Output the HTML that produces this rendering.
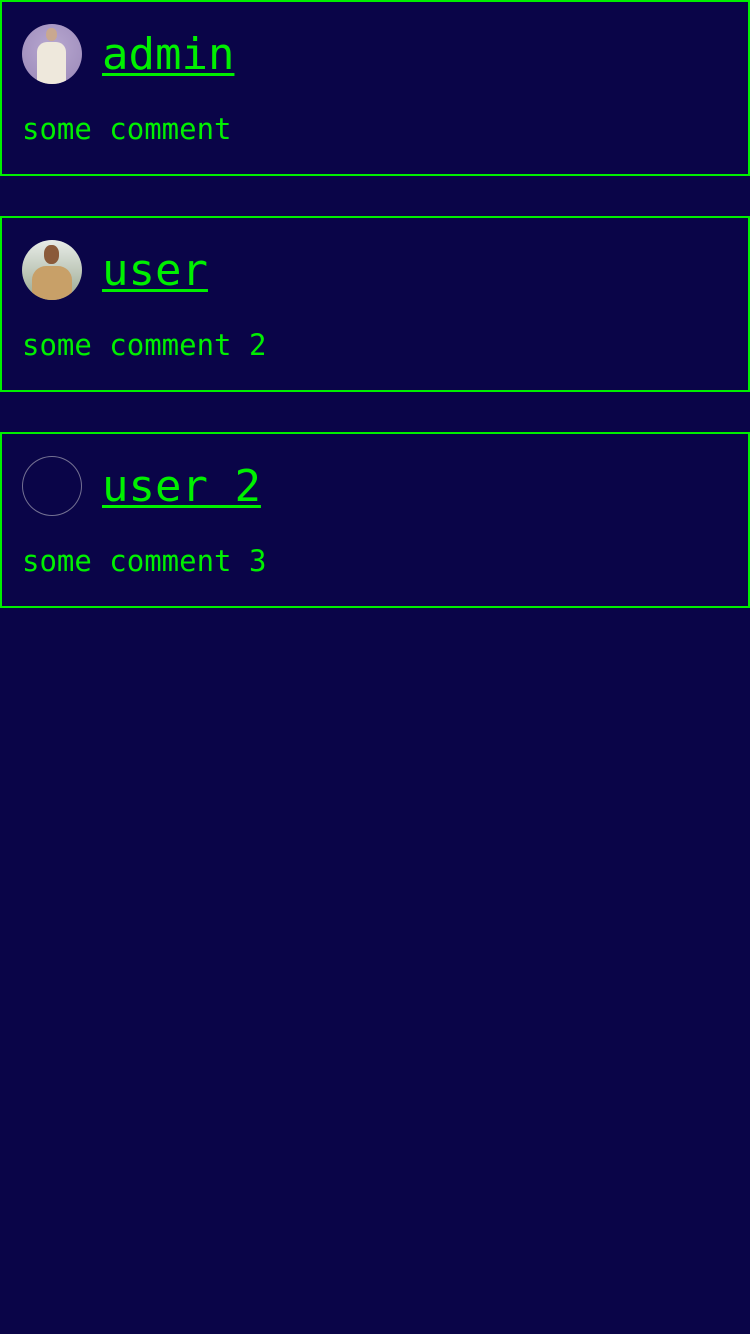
<!DOCTYPE html>
<html><head><meta charset="utf-8"><style>
html,body{margin:0;padding:0;background:#0a0548;width:750px;height:1334px;overflow:hidden}
body{position:relative;font-family:"DejaVu Sans Mono","Liberation Mono",monospace;color:#00f000}
.card{position:absolute;left:0;width:746px;height:172px;border:2px solid #00f000}
.av{position:absolute;left:20px;top:22px;width:60px;height:60px;border-radius:50%;overflow:hidden}
.name{position:absolute;left:100px;top:31px;font-size:44px;line-height:44px;text-decoration:underline;text-decoration-thickness:3px;text-underline-offset:4px;white-space:pre}
.cm{position:absolute;left:20px;top:113px;font-size:29px;line-height:29px;white-space:pre}
</style></head><body>
<div class="card" style="top:0">
 <div class="av" style="background:radial-gradient(circle at 50% 40%,#b8a8d0,#9a88b8)">
  <div style="position:absolute;left:24px;top:4px;width:11px;height:13px;border-radius:45%;background:#c9a890"></div>
  <div style="position:absolute;left:15px;top:18px;width:29px;height:44px;border-radius:10px 10px 0 0;background:#eee8dc"></div>
 </div>
 <div class="name">admin</div>
 <div class="cm">some comment</div>
</div>
<div class="card" style="top:216px">
 <div class="av" style="background:linear-gradient(#e8ece8,#9aa890)">
  <div style="position:absolute;left:22px;top:5px;width:15px;height:19px;border-radius:45%;background:#8a5a3a"></div>
  <div style="position:absolute;left:10px;top:26px;width:40px;height:36px;border-radius:14px 14px 0 0;background:#c8a068"></div>
 </div>
 <div class="name">user</div>
 <div class="cm">some comment 2</div>
</div>
<div class="card" style="top:432px">
 <div class="av" style="box-shadow:inset 0 0 0 1px rgba(220,220,220,.5)"></div>
 <div class="name">user 2</div>
 <div class="cm">some comment 3</div>
</div>
</body></html>
